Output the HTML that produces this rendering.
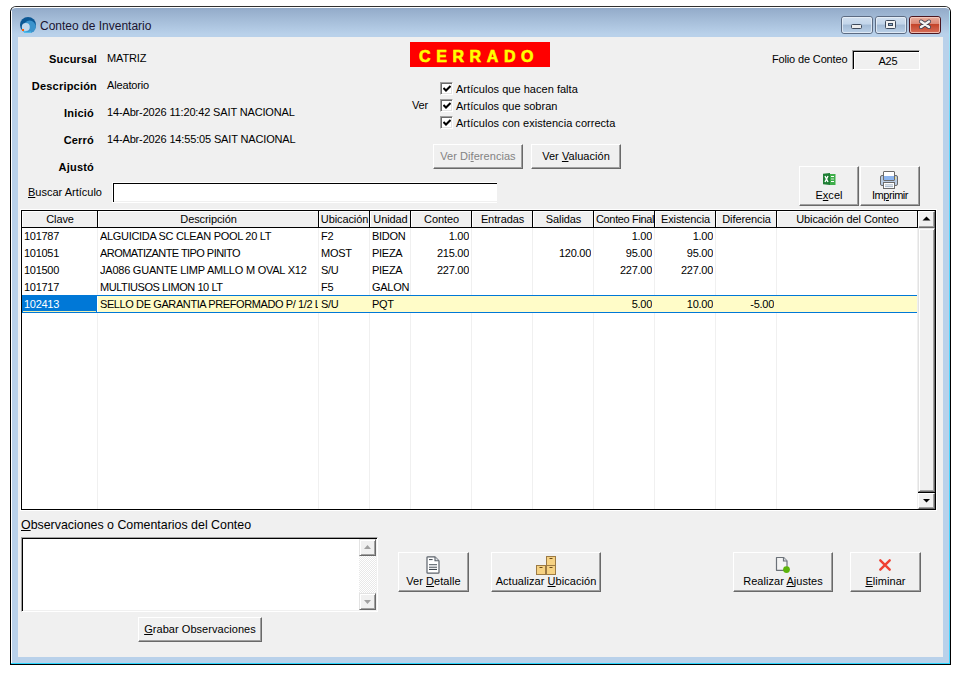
<!DOCTYPE html>
<html><head><meta charset="utf-8">
<style>
*{box-sizing:border-box;margin:0;padding:0}
html,body{width:963px;height:689px;overflow:hidden;background:#fff;font-family:"Liberation Sans",sans-serif;font-size:11px;color:#000}
.a{position:absolute}
.t{position:absolute;white-space:pre;line-height:13px;height:13px;letter-spacing:-0.15px}
.b{font-weight:bold;letter-spacing:0.2px}
#win{position:absolute;left:10px;top:6px;width:941px;height:659px;background:#b9d1ea;border:1px solid #000;border-top-color:#303030;border-radius:6px 6px 0 0}
#title{position:absolute;left:0;top:0;width:939px;height:30px;border-radius:5px 5px 0 0;border-top:1px solid #fff;background:linear-gradient(#93abc9,#b9d1ea 90%)}
#client{position:absolute;left:18px;top:37px;width:925px;height:620px;background:#f0f0f0}
.btn{position:absolute;background:#f0f0f0;border-top:1px solid #fff;border-left:1px solid #fff;border-right:1px solid #696969;border-bottom:1px solid #696969;box-shadow:inset -1px -1px 0 #a0a0a0}
.btn span{position:absolute;left:0;right:0;text-align:center;white-space:pre;line-height:13px;letter-spacing:0.05px}
u{text-decoration:underline;text-underline-offset:1px}
.hd{position:absolute;top:211px;height:16px;background:#f0f0f0;border-left:1px solid #fff;border-top:1px solid #fff;text-align:center;line-height:14px;white-space:pre;overflow:hidden;letter-spacing:-0.1px}
.vs{position:absolute;top:228px;width:1px;height:281px;background:#f0f0f0}
.hs{position:absolute;top:210px;width:1px;height:18px;background:#000}
.c{position:absolute;white-space:pre;line-height:13px;height:13px;overflow:hidden;letter-spacing:-0.28px}
.r{text-align:right}
.sb{position:absolute;background:#f0f0f0;border-top:1px solid #e3e3e3;border-left:1px solid #e3e3e3;border-right:1px solid #696969;border-bottom:1px solid #696969;box-shadow:inset 1px 1px 0 #fff, inset -1px -1px 0 #a0a0a0}
.chk{position:absolute;width:13px;height:13px;background:#fff;border-top:1px solid #a0a0a0;border-left:1px solid #a0a0a0;border-right:1px solid #fff;border-bottom:1px solid #fff;box-shadow:inset 1px 1px 0 #696969, inset -1px -1px 0 #e3e3e3}
</style></head>
<body>
<div id="win"><div id="title"></div></div>
<div class="a" style="left:11px;top:11px;width:1px;height:653px;background:#fff"></div>
<div class="a" style="left:949px;top:11px;width:1px;height:653px;background:linear-gradient(#b4e8f6,#60d8ff 120px,#40d4ff)"></div>
<div class="a" style="left:11px;top:663px;width:939px;height:1px;background:#29d6ff"></div>
<svg class="a" style="left:20px;top:17px" width="16" height="16" viewBox="0 0 16 16">
  <circle cx="8" cy="8" r="8" fill="#0b5794"/>
  <circle cx="9.6" cy="9.8" r="6.2" fill="#3b93cc"/>
  <path d="M3.5 13.5 A6 6 0 0 0 11 15.2" stroke="#4dbbec" stroke-width="2" fill="none"/>
  <circle cx="5.8" cy="9.9" r="4" fill="#c3d8ec"/>
  <rect x="2" y="12" width="2" height="2" fill="#ff5a00"/>
</svg>
<div class="t" style="left:40px;top:19px;font-size:12px;line-height:14px;color:#1a1430;letter-spacing:0">Conteo de Inventario</div>
<svg class="a" style="left:841px;top:16px" width="100" height="18" viewBox="0 0 100 18">
  <defs>
    <linearGradient id="gb" x1="0" y1="0" x2="0" y2="1">
      <stop offset="0" stop-color="#d3e1f0"/><stop offset="0.45" stop-color="#c2d5ea"/><stop offset="0.5" stop-color="#a2bad5"/><stop offset="1" stop-color="#bcd2e9"/>
    </linearGradient>
    <linearGradient id="gr" x1="0" y1="0" x2="0" y2="1">
      <stop offset="0" stop-color="#eab0a0"/><stop offset="0.42" stop-color="#dc8a78"/><stop offset="0.47" stop-color="#c4452a"/><stop offset="1" stop-color="#d8715c"/>
    </linearGradient>
  </defs>
  <rect x="0.5" y="0.5" width="31" height="17" rx="2.5" fill="url(#gb)" stroke="#5c6b82"/>
  <rect x="1.5" y="1.5" width="29" height="15" rx="1.5" fill="none" stroke="#eef4fb" stroke-opacity="0.7"/>
  <rect x="10.5" y="8.5" width="10" height="4" rx="1" fill="#ececec" stroke="#3e4a5c"/>
  <rect x="34.5" y="0.5" width="31" height="17" rx="2.5" fill="url(#gb)" stroke="#5c6b82"/>
  <rect x="35.5" y="1.5" width="29" height="15" rx="1.5" fill="none" stroke="#eef4fb" stroke-opacity="0.7"/>
  <rect x="44.5" y="4.5" width="10" height="8" rx="1" fill="#f2f2f2" stroke="#3e4a5c"/>
  <rect x="47.5" y="7.5" width="4" height="2" fill="#8fb0d0" stroke="#3e4a5c"/>
  <rect x="68.5" y="0.5" width="31" height="17" rx="2.5" fill="url(#gr)" stroke="#4b1620"/>
  <rect x="69.5" y="1.5" width="29" height="15" rx="1.5" fill="none" stroke="#f6d0c4" stroke-opacity="0.8"/>
  <path d="M80 5.5 L88 11 M88 5.5 L80 11" stroke="#3d3d4d" stroke-width="4" stroke-linecap="round"/>
  <path d="M80 5.5 L88 11 M88 5.5 L80 11" stroke="#f4f4f4" stroke-width="2.5" stroke-linecap="round"/>
</svg>
<div id="client"></div>


<div class="t b" style="left:18px;width:79px;text-align:right;top:53px">Sucursal</div>
<div class="t b" style="left:18px;width:79px;text-align:right;top:80px">Descripción</div>
<div class="t b" style="left:18px;width:76px;text-align:right;top:107px">Inició</div>
<div class="t b" style="left:18px;width:76px;text-align:right;top:134px">Cerró</div>
<div class="t b" style="left:18px;width:76px;text-align:right;top:161px">Ajustó</div>
<div class="t" style="left:107px;top:52px">MATRIZ</div>
<div class="t" style="left:107px;top:79px">Aleatorio</div>
<div class="t" style="left:107px;top:106px">14-Abr-2026 11:20:42 SAIT NACIONAL</div>
<div class="t" style="left:107px;top:133px">14-Abr-2026 14:55:05 SAIT NACIONAL</div>
<div class="a" style="left:410px;top:42px;width:140px;height:25px;background:#ff0000"></div>
<div class="t" style="left:419px;top:48px;font-weight:bold;font-size:16px;line-height:18px;height:18px;color:#ffff00;letter-spacing:5.6px;-webkit-text-stroke:0.6px #ffff00">CERRADO</div>
<div class="t" style="left:772px;top:53px">Folio de Conteo</div>
<div class="a" style="left:852px;top:50px;width:68px;height:20px;border-top:1px solid #a0a0a0;border-left:1px solid #a0a0a0;border-right:1px solid #fff;border-bottom:1px solid #fff;background:#f0f0f0;box-shadow:inset 1px 1px 0 #000, inset 2px 2px 0 #fff"></div>
<div class="t" style="left:854px;top:55px;width:68px;text-align:center">A25</div>
<div class="t" style="left:412px;top:99px">Ver</div>

<div class="chk" style="left:440px;top:82px"></div>
<svg class="a" style="left:443px;top:85px" width="8" height="8" viewBox="0 0 8 8"><path d="M0.5 3 L3 5.5 L7.5 1" stroke="#000" stroke-width="2" fill="none"/></svg>
<div class="chk" style="left:440px;top:99px"></div>
<svg class="a" style="left:443px;top:102px" width="8" height="8" viewBox="0 0 8 8"><path d="M0.5 3 L3 5.5 L7.5 1" stroke="#000" stroke-width="2" fill="none"/></svg>
<div class="chk" style="left:440px;top:116px"></div>
<svg class="a" style="left:443px;top:119px" width="8" height="8" viewBox="0 0 8 8"><path d="M0.5 3 L3 5.5 L7.5 1" stroke="#000" stroke-width="2" fill="none"/></svg>

<div class="t" style="left:456px;top:83px;letter-spacing:0.03px">Artículos que hacen falta</div>
<div class="t" style="left:456px;top:100px;letter-spacing:0.03px">Artículos que sobran</div>
<div class="t" style="left:456px;top:117px;letter-spacing:0.03px">Artículos con existencia correcta</div>
<div class="btn" style="left:433px;top:144px;width:90px;height:25px"><span style="top:5px;color:#838383">Ver Di<u>f</u>erencias</span></div>
<div class="btn" style="left:531px;top:144px;width:90px;height:25px"><span style="top:5px">Ver <u>V</u>aluación</span></div>
<div class="btn" style="left:799px;top:166px;width:60px;height:40px"><span style="top:22px">E<u>x</u>cel</span></div>
<div class="btn" style="left:860px;top:166px;width:60px;height:40px"><span style="top:22px;letter-spacing:-0.45px">Im<u>p</u>rimir</span></div>
<div class="t" style="left:28px;top:186px;letter-spacing:0"><u>B</u>uscar Artículo</div>
<div class="a" style="left:112px;top:182px;width:385px;height:21px;background:#fff;border-top:1px solid #fff;border-left:1px solid #fff;border-bottom:1px solid #fff;box-shadow:inset 1px 1px 0 #000, inset 0 -1px 0 #f0f0f0"></div>

<div class="a" style="left:20px;top:209px;width:917px;height:302px;background:#fff"></div>
<div class="a" style="left:21px;top:210px;width:915px;height:300px;background:#fff;border:1px solid #000;border-right-width:1px"></div>
<div class="hd" style="left:22px;width:75px">Clave</div>
<div class="hd" style="left:98px;width:220px">Descripción</div>
<div class="hd" style="left:319px;width:50px">Ubicación</div>
<div class="hd" style="left:370px;width:40px">Unidad</div>
<div class="hd" style="left:411px;width:60px">Conteo</div>
<div class="hd" style="left:472px;width:60px">Entradas</div>
<div class="hd" style="left:533px;width:60px">Salidas</div>
<div class="hd" style="left:594px;width:60px;letter-spacing:-0.35px;text-align:left;padding-left:1px">Conteo Final</div>
<div class="hd" style="left:655px;width:60px">Existencia</div>
<div class="hd" style="left:716px;width:60px">Diferencia</div>
<div class="hd" style="left:777px;width:140px">Ubicación del Conteo</div>
<div class="a" style="left:22px;top:227px;width:896px;height:1px;background:#000"></div>
<div class="hs" style="left:97px"></div>
<div class="vs" style="left:97px"></div>
<div class="hs" style="left:318px"></div>
<div class="vs" style="left:318px"></div>
<div class="hs" style="left:369px"></div>
<div class="vs" style="left:369px"></div>
<div class="hs" style="left:410px"></div>
<div class="vs" style="left:410px"></div>
<div class="hs" style="left:471px"></div>
<div class="vs" style="left:471px"></div>
<div class="hs" style="left:532px"></div>
<div class="vs" style="left:532px"></div>
<div class="hs" style="left:593px"></div>
<div class="vs" style="left:593px"></div>
<div class="hs" style="left:654px"></div>
<div class="vs" style="left:654px"></div>
<div class="hs" style="left:715px"></div>
<div class="vs" style="left:715px"></div>
<div class="hs" style="left:776px"></div>
<div class="vs" style="left:776px"></div>
<div class="hs" style="left:917px"></div>
<div class="vs" style="left:917px"></div>
<div class="a" style="left:22px;top:295px;width:895px;height:18px;background:#0078d7"></div>
<div class="a" style="left:97px;top:296px;width:820px;height:16px;background:#fffcc8;border-left:1px solid #fff"></div>
<div class="a" style="left:23px;top:311px;width:73px;height:1px;background:#f0f0b0"></div>
<div class="c" style="left:24px;top:230px;width:73px">101787</div>
<div class="c" style="left:100px;top:230px;width:218px;letter-spacing:-0.32px">ALGUICIDA SC CLEAN POOL 20 LT</div>
<div class="c" style="left:321px;top:230px;width:48px">F2</div>
<div class="c" style="left:372px;top:230px;width:38px">BIDON</div>
<div class="c r" style="left:411px;top:230px;width:58px">1.00</div>
<div class="c r" style="left:594px;top:230px;width:58px">1.00</div>
<div class="c r" style="left:655px;top:230px;width:58px">1.00</div>
<div class="c" style="left:24px;top:247px;width:73px">101051</div>
<div class="c" style="left:100px;top:247px;width:218px;letter-spacing:-0.56px">AROMATIZANTE TIPO PINITO</div>
<div class="c" style="left:321px;top:247px;width:48px">MOST</div>
<div class="c" style="left:372px;top:247px;width:38px">PIEZA</div>
<div class="c r" style="left:411px;top:247px;width:58px">215.00</div>
<div class="c r" style="left:533px;top:247px;width:58px">120.00</div>
<div class="c r" style="left:594px;top:247px;width:58px">95.00</div>
<div class="c r" style="left:655px;top:247px;width:58px">95.00</div>
<div class="c" style="left:24px;top:264px;width:73px">101500</div>
<div class="c" style="left:100px;top:264px;width:218px;letter-spacing:-0.23px">JA086 GUANTE LIMP AMLLO M OVAL X12</div>
<div class="c" style="left:321px;top:264px;width:48px">S/U</div>
<div class="c" style="left:372px;top:264px;width:38px">PIEZA</div>
<div class="c r" style="left:411px;top:264px;width:58px">227.00</div>
<div class="c r" style="left:594px;top:264px;width:58px">227.00</div>
<div class="c r" style="left:655px;top:264px;width:58px">227.00</div>
<div class="c" style="left:24px;top:281px;width:73px">101717</div>
<div class="c" style="left:100px;top:281px;width:218px;letter-spacing:-0.43px">MULTIUSOS LIMON 10 LT</div>
<div class="c" style="left:321px;top:281px;width:48px">F5</div>
<div class="c" style="left:372px;top:281px;width:38px">GALON</div>
<div class="c" style="left:24px;top:298px;width:73px;color:#fff">102413</div>
<div class="c" style="left:100px;top:298px;width:218px;letter-spacing:-0.4px">SELLO DE GARANTIA PREFORMADO P/ 1/2 LT</div>
<div class="c" style="left:321px;top:298px;width:48px">S/U</div>
<div class="c" style="left:372px;top:298px;width:38px">PQT</div>
<div class="c r" style="left:594px;top:298px;width:58px">5.00</div>
<div class="c r" style="left:655px;top:298px;width:58px">10.00</div>
<div class="c r" style="left:716px;top:298px;width:58px">-5.00</div>
<div class="a" style="left:935px;top:210px;width:1px;height:300px;background:#000"></div>
<div class="btn" style="left:918px;top:211px;width:17px;height:17px"></div>
<svg class="a" style="left:922px;top:216px" width="9" height="5" viewBox="0 0 9 5"><path d="M0.5 4.5 L4.5 0.5 L8.5 4.5Z" fill="#000"/></svg>
<div class="sb" style="left:918px;top:228px;width:17px;height:264px"></div>
<div class="a" style="left:918px;top:492px;width:17px;height:1px;background:#000"></div>
<div class="btn" style="left:918px;top:493px;width:17px;height:16px"></div>
<svg class="a" style="left:922px;top:498px" width="9" height="5" viewBox="0 0 9 5"><path d="M1 1 L4.5 4.5 L8 1Z" fill="#000"/></svg>

<div class="t" style="left:21px;top:518px;font-size:12.4px;line-height:14px;height:15px;letter-spacing:0"><u>O</u>bservaciones o Comentarios del Conteo</div>
<div class="a" style="left:21px;top:537px;width:357px;height:75px;background:#fff;border-top:1px solid #a0a0a0;border-left:1px solid #a0a0a0;border-right:1px solid #fff;border-bottom:1px solid #fff;box-shadow:inset 1px 1px 0 #000, inset -1px -1px 0 #f0f0f0"></div>
<div class="a" style="left:359px;top:539px;width:17px;height:71px;background-color:#fff;background-image:conic-gradient(#e8e8e8 25%,#fff 0 50%,#e8e8e8 0 75%,#fff 0);background-size:2px 2px"></div>
<div class="sb" style="left:359px;top:539px;width:17px;height:17px"></div>
<svg class="a" style="left:364px;top:545px" width="7" height="4" viewBox="0 0 7 4"><path d="M0 4 L3.5 0 L7 4Z" fill="#a0a0a0"/></svg>
<div class="sb" style="left:359px;top:593px;width:17px;height:17px"></div>
<svg class="a" style="left:364px;top:600px" width="7" height="4" viewBox="0 0 7 4"><path d="M0 0 L7 0 L3.5 4Z" fill="#a0a0a0"/></svg>
<div class="btn" style="left:138px;top:617px;width:124px;height:25px"><span style="top:5px"><u>G</u>rabar Observaciones</span></div>
<div class="btn" style="left:398px;top:552px;width:71px;height:40px"><span style="top:22px">Ver <u>D</u>etalle</span></div>
<div class="btn" style="left:491px;top:552px;width:110px;height:40px"><span style="top:22px">Actualizar <u>U</u>bicación</span></div>
<div class="btn" style="left:733px;top:552px;width:100px;height:40px"><span style="top:22px">Realizar <u>A</u>justes</span></div>
<div class="btn" style="left:850px;top:552px;width:71px;height:40px"><span style="top:22px"><u>E</u>liminar</span></div>


<svg class="a" style="left:823px;top:173px" width="13" height="13" viewBox="0 0 13 13">
  <rect x="6.5" y="1" width="6" height="11" fill="#3fae4a"/>
  <path d="M0 0.8 L7 0 L7 12 L0 11.2Z" fill="#1f7f35"/>
  <path d="M2 3 L5 9 M5 3 L2 9" stroke="#fff" stroke-width="1.4"/>
  <rect x="8" y="3" width="3" height="1" fill="#fff"/><rect x="8" y="5.5" width="3" height="1" fill="#cfe9cf"/><rect x="8" y="8" width="3" height="1" fill="#fff"/>
</svg>
<svg class="a" style="left:879px;top:170px" width="20" height="20" viewBox="0 0 20 20">
  <rect x="1.5" y="5.5" width="17" height="10" rx="1.5" fill="#b9cbe2" stroke="#6b6b6b"/>
  <rect x="4.5" y="1.5" width="11" height="9" rx="0.5" fill="#fff" stroke="#6b6b6b"/>
  <rect x="5" y="6" width="10" height="4" fill="#8bb4ee"/>
  <rect x="4.5" y="12.5" width="11" height="6" fill="#fff" stroke="#6b6b6b"/>
  <rect x="6" y="14.5" width="8" height="0.8" fill="#8aa0b8"/><rect x="6" y="16.3" width="8" height="0.8" fill="#8aa0b8"/>
  <rect x="16" y="7" width="1" height="2" fill="#f0e080"/>
</svg>
<svg class="a" style="left:426px;top:556px" width="14" height="18" viewBox="0 0 14 18">
  <path d="M1 1.6 Q1 0.8 1.8 0.8 L9 0.8 L13 4.8 L13 16.4 Q13 17.2 12.2 17.2 L1.8 17.2 Q1 17.2 1 16.4 Z" fill="#fff" stroke="#5c636b" stroke-width="1.2" stroke-linejoin="round"/>
  <path d="M9 1 L9 4.8 L12.8 4.8" fill="#e3e6ea" stroke="#5c636b" stroke-width="1.1"/>
  <rect x="3" y="3" width="3.6" height="1.1" fill="#4a525a"/>
  <rect x="3" y="8" width="8" height="1.1" fill="#6e757c"/>
  <rect x="3" y="9.1" width="8" height="1.7" fill="#d6d9dc"/>
  <rect x="3" y="10.8" width="8" height="1.1" fill="#6e757c"/>
  <rect x="3" y="12.9" width="8" height="1.1" fill="#3e464e"/>
</svg>
<svg class="a" style="left:536px;top:556px" width="20" height="19" viewBox="0 0 20 19">
  <rect x="10.5" y="0.5" width="9" height="9" fill="#f6d283" stroke="#9c7a44"/>
  <rect x="0.5" y="9.5" width="9" height="9" fill="#f6d283" stroke="#9c7a44"/>
  <rect x="10.5" y="9.5" width="9" height="9" fill="#f6d283" stroke="#9c7a44"/>
  <rect x="13.5" y="2" width="3" height="1" fill="#6a4a1a"/>
  <rect x="3.5" y="11" width="3" height="1" fill="#6a4a1a"/>
  <rect x="13.5" y="11" width="3" height="1" fill="#6a4a1a"/>
</svg>
<svg class="a" style="left:775px;top:556px" width="16" height="18" viewBox="0 0 16 18">
  <path d="M1.5 1.5 L8.5 1.5 L12 5 L12 14.3 L1.5 14.3 Z" fill="#f4f4f4" stroke="#6b7178" stroke-width="1.2" stroke-linejoin="round"/>
  <path d="M8.5 1.5 L8.5 5 L12 5" fill="#dfe3e8" stroke="#6b7178" stroke-width="1.2"/>
  <circle cx="11.5" cy="13.6" r="3.4" fill="#5cb30a"/>
</svg>
<svg class="a" style="left:878px;top:558px" width="14" height="14" viewBox="0 0 14 14">
  <path d="M2.3 2.3 L11.7 11.7 M11.7 2.3 L2.3 11.7" stroke="#ef4132" stroke-width="2.4" stroke-linecap="round"/>
</svg>

</body></html>
